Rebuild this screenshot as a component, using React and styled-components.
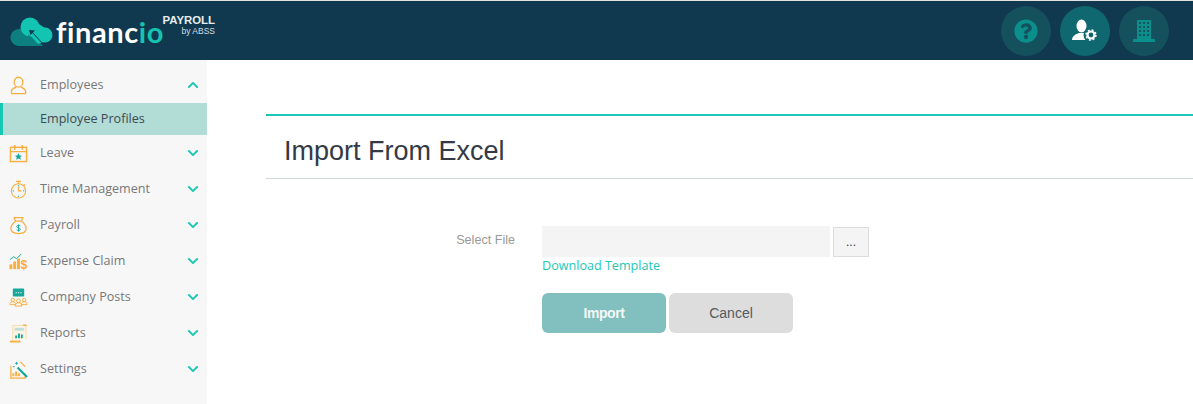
import React from 'react';
import styled, { createGlobalStyle } from 'styled-components';
import { FaQuestionCircle, FaChevronUp, FaChevronDown } from 'react-icons/fa';

const GlobalStyle = createGlobalStyle`
  html, body {
    margin: 0;
    padding: 0;
    background: #fff;
    font-family: 'Open Sans', sans-serif;
  }
`;

const Page = styled.div`
  width: 1193px;
  height: 404px;
  overflow: hidden;
  display: flex;
  flex-direction: column;
  border-top: 1px solid #e3e3e3;
  box-sizing: border-box;
`;

const Header = styled.header`
  height: 59px;
  flex: none;
  background: #10394f;
  display: flex;
  align-items: center;
  justify-content: space-between;
  padding: 0 24px 0 10px;
`;

const Logo = styled.div`
  align-self: flex-start;
  display: flex;
  align-items: flex-start;
`;

const LogoMark = styled.svg`
  width: 43px;
  height: 30px;
  margin-top: 16px;
`;

const LogoWord = styled.div`
  width: 108px;
  box-sizing: border-box;
  padding-left: 3px;
  font-family: 'Lato', sans-serif;
  font-weight: bold;
  font-size: 29px;
  line-height: 32px;
  color: #fff;
  margin-top: 15px;
  letter-spacing: 0.6px;

  span {
    color: #16c3b0;
  }
`;

const LogoTag = styled.div`
  font-family: 'Liberation Sans', sans-serif;
  text-align: right;
  color: #e8edf0;
  margin-top: 12px;
  width: 54px;
  white-space: nowrap;
  font-size: 11.4px;
  line-height: 14px;
  font-weight: bold;

  small {
    display: block;
    font-size: 8.5px;
    line-height: 9px;
    font-weight: normal;
    color: #d5dde2;
  }
`;

const HeaderActions = styled.div`
  display: flex;
  gap: 9px;
`;

const RoundButton = styled.div`
  width: 50px;
  height: 50px;
  border-radius: 50%;
  background: ${p => (p.$active ? '#0f6870' : '#15505d')};
  color: ${p => (p.$active ? '#fff' : '#0b8f8c')};
  display: flex;
  align-items: center;
  justify-content: center;
  font-size: 24px;
`;

const Body = styled.div`
  flex: 1;
  display: flex;
  min-height: 0;
`;

const Sidebar = styled.nav`
  width: 207px;
  flex: none;
  background: #f7f7f7;
  padding-top: 7px;
  box-sizing: border-box;
`;

const NavRow = styled.div`
  height: 36px;
  display: flex;
  align-items: center;
  padding: 0 8px 0 9px;
  color: #77777a;
  font-size: 12.6px;
`;

const NavIcon = styled.svg`
  width: 19px;
  height: 19px;
  flex: none;
  margin-right: 12px;
`;

const NavLabel = styled.span`
  flex: 1;
  padding-bottom: 2px;
`;

const Chevron = styled.span`
  color: #1cc7b5;
  font-size: 12px;
  display: flex;
`;

const SubRow = styled.div`
  height: 32px;
  display: flex;
  align-items: center;
  box-sizing: border-box;
  background: #b2dcd6;
  border-left: 3px solid #16c8b4;
  padding: 0 0 2px 37px;
  color: #3c4a52;
  font-size: 12.6px;
`;

const Main = styled.main`
  flex: 1;
  padding: 54px 0 0 59px;
`;

const Card = styled.section`
  border-top: 2px solid #1cc7b5;
`;

const Title = styled.h1`
  margin: 0;
  height: 63px;
  box-sizing: border-box;
  border-bottom: 1px solid #cfd8dc;
  padding-left: 18px;
  font-family: 'Liberation Sans', sans-serif;
  font-weight: normal;
  font-size: 27px;
  line-height: 70px;
  color: #333a45;
`;

const Form = styled.div`
  display: grid;
  grid-template-columns: 249px 1fr;
  column-gap: 27px;
  padding-top: 47px;
`;

const FieldLabel = styled.label`
  font-family: 'Liberation Sans', sans-serif;
  font-size: 12.6px;
  color: #999;
  text-align: right;
  line-height: 29px;
`;

const FileRow = styled.div`
  display: flex;
  align-items: flex-end;
  gap: 3px;
`;

const FileInput = styled.div`
  width: 288px;
  height: 31px;
  background: #f4f4f4;
`;

const BrowseButton = styled.div`
  width: 36px;
  height: 30px;
  box-sizing: border-box;
  background: #f4f4f4;
  border: 1px solid #ddd;
  display: flex;
  align-items: center;
  justify-content: center;
  color: #333;
  font-family: 'Liberation Sans', sans-serif;
  font-size: 12px;
`;

const TemplateLink = styled.a`
  display: block;
  color: #1cc7b5;
  font-size: 12.6px;
  line-height: 17px;
`;

const Actions = styled.div`
  display: flex;
  gap: 3px;
  margin-top: 19px;
`;

const ActionButton = styled.button`
  width: 124px;
  height: 40px;
  border: none;
  border-radius: 6px;
  background: ${p => (p.$primary ? '#82bfbf' : '#dddddd')};
  color: ${p => (p.$primary ? '#f2f8f8' : '#555a60')};
  font-family: 'Liberation Sans', sans-serif;
  font-size: 14px;
  font-weight: ${p => (p.$primary ? 'bold' : 'normal')};
  letter-spacing: ${p => (p.$primary ? '-0.4px' : '0')};
`;

const orange = '#f9ae3f';
const teal = '#17a89b';

const icons = {
  employees: (
    <g fill="none" stroke={orange} strokeWidth="1.4">
      <ellipse cx="10" cy="6.500" rx="4.600" ry="5.200" />
      <path d="M2.500 18.500v-2c0-3 3-4 5-5M17.500 18.500v-2c0-3-3-4-5-5M2.500 18.500h15" />
    </g>
  ),
  leave: (
    <g fill="none" stroke={orange} strokeWidth="1.5">
      <rect x="1.500" y="3.500" width="17" height="15" />
      <path d="M1.500 8h17M6 1v5M14 1v5" />
      <path d="M10 9.500l1.200 2.600 2.600.2-2 1.700.7 2.600-2.500-1.400-2.500 1.400.7-2.600-2-1.700 2.600-.2z" fill={teal} stroke="none" />
    </g>
  ),
  time: (
    <g fill="none" stroke={orange} strokeWidth="1.200">
      <circle cx="10" cy="11.500" r="7.500" />
      <path d="M7.500 1.500h5M10 1.500v2.500M15.500 4.500l1.500 1.500" />
      <path d="M10 7v4.500h3.500" />
      <path d="M10 5.500v1M4 11.500h1M15 11.500h1M10 16.500v1" stroke={teal} />
    </g>
  ),
  payroll: (
    <g fill="none" stroke={orange} strokeWidth="1.300">
      <path d="M7 5.500L5.500 1.800h9L13 5.500M7 5.500h6M7 5.500c-3 2-5 5-5 8 0 3.500 3 5 8 5s8-1.500 8-5c0-3-2-6-5-8" />
      <path d="M12 10.500c-.5-1-3.500-1.300-3.900.3-.4 2 3.900 1.300 3.900 3.200 0 1.500-3 1.700-4 .4M10 9v7.500" stroke={teal} strokeWidth="1" />
    </g>
  ),
  expense: (
    <g>
      <path d="M1 8l4-3 3 2 5-5" fill="none" stroke={teal} strokeWidth="1" />
      <g fill={orange}>
        <rect x="0.500" y="13" width="3" height="5" />
        <rect x="4.500" y="10" width="3" height="8" />
        <rect x="8.500" y="7" width="3" height="11" />
      </g>
      <text x="12.200" y="17.500" fontFamily="Liberation Sans" fontWeight="bold" fontSize="13" fill={orange}>$</text>
    </g>
  ),
  posts: (
    <g>
      <rect x="4" y="0.500" width="12" height="8.500" rx="1" fill={teal} />
      <path d="M7 5h1.200M9.500 5h1.200M12 5h1.200" stroke="#fff" strokeWidth="1.300" />
      <g fill="none" stroke={orange} strokeWidth="1">
        <circle cx="4" cy="12.500" r="1.800" />
        <path d="M1 17.500c0-2 1-3 3-3s3 1 3 3z" />
        <circle cx="16" cy="12.500" r="1.800" />
        <path d="M13 17.500c0-2 1-3 3-3s3 1 3 3z" />
        <circle cx="10" cy="13.500" r="2" />
        <path d="M6.500 19c0-2.500 1.500-3.500 3.500-3.500s3.500 1 3.500 3.500z" />
      </g>
    </g>
  ),
  reports: (
    <g>
      <path d="M4 18V1.500h14V16" fill="#fdf3e2" stroke="#f6dcb2" strokeWidth="1" />
      <path d="M15 1l3.500.5" stroke={orange} strokeWidth="1.500" />
      <rect x="6" y="4" width="10" height="3" fill="#bfdedb" />
      <path d="M7.500 15v-3M10.500 15v-5M13.500 15V11" stroke={teal} strokeWidth="2" />
      <path d="M1 18.500h11" stroke={orange} strokeWidth="2" />
    </g>
  ),
  settings: (
    <g>
      <path d="M2 6v13h15v-5M12 2l5 5" fill="none" stroke={orange} strokeWidth="1.300" />
      <path d="M4.500 17v-3M7.500 17v-5M10.500 17v-3" stroke={orange} strokeWidth="2" />
      <path d="M9 8l10 10" stroke={teal} strokeWidth="2.300" />
      <path d="M8 2v3M6.500 3.500h3M4 7h2" stroke={teal} strokeWidth="1" />
    </g>
  ),
};

const menu = [
  { key: 'leave', label: 'Leave' },
  { key: 'time', label: 'Time Management' },
  { key: 'payroll', label: 'Payroll' },
  { key: 'expense', label: 'Expense Claim' },
  { key: 'posts', label: 'Company Posts' },
  { key: 'reports', label: 'Reports' },
  { key: 'settings', label: 'Settings' },
];

function UserGearIcon() {
  return (
    <svg width="26" height="23" viewBox="0 0 26 23">
      <ellipse cx="9.500" cy="7" rx="5" ry="6.500" fill="#fff" />
      <path d="M0 21c0-4 4-6 7-7h5c2 0 3 .5 4 1l-2 6z" fill="#fff" />
      <circle cx="19" cy="16" r="7.500" fill="#0f6870" />
      <circle cx="19" cy="16" r="3.500" fill="none" stroke="#fff" strokeWidth="2.200" />
      <circle cx="19" cy="16" r="5" fill="none" stroke="#fff" strokeWidth="1.400" strokeDasharray="2 1.930" />
    </svg>
  );
}

function BuildingIcon() {
  const cols = [6, 10, 14];
  const rows = [2, 6, 10, 14];
  return (
    <svg width="22" height="22" viewBox="0 0 22 22" shapeRendering="crispEdges">
      <path d="M4 0h14v19h4v3H0v-3h4z" fill="currentColor" />
      {rows.map(y =>
        cols.map(x => <rect key={`${x}-${y}`} x={x} y={y} width="2" height="2" fill="#15505d" />)
      )}
    </svg>
  );
}

export default function App() {
  return (
    <>
      <GlobalStyle />
      <Page>
        <Header>
          <Logo>
            <LogoMark viewBox="0 0 43 30">
              <path d="M8 29a8.500 8.500 0 1 1 2-17c4-1 8 1 11 4l12 13z" fill="#0d7f80" />
              <circle cx="20" cy="10" r="9.500" fill="#14c4b2" />
              <circle cx="35" cy="18" r="7.500" fill="#14c4b2" />
              <path d="M20 1l15 10-1 14-6 2-10-11-6-2z" fill="#14c4b2" />
              <path d="M18 17l11 12h-9z" fill="#0d7f80" />
              <path d="M22 15l11 12" stroke="#10394f" strokeWidth="1" />
              <path d="M19 13l6 .5-4.500 4.500z" fill="#10394f" />
            </LogoMark>
            <LogoWord>financ<span>io</span></LogoWord>
            <LogoTag>PAYROLL<small>by ABSS</small></LogoTag>
          </Logo>
          <HeaderActions>
            <RoundButton><FaQuestionCircle /></RoundButton>
            <RoundButton $active><UserGearIcon /></RoundButton>
            <RoundButton><BuildingIcon /></RoundButton>
          </HeaderActions>
        </Header>
        <Body>
          <Sidebar>
            <NavRow>
              <NavIcon viewBox="0 0 20 20">{icons.employees}</NavIcon>
              <NavLabel>Employees</NavLabel>
              <Chevron><FaChevronUp /></Chevron>
            </NavRow>
            <SubRow>Employee Profiles</SubRow>
            {menu.map(item => (
              <NavRow key={item.key}>
                <NavIcon viewBox="0 0 20 20">{icons[item.key]}</NavIcon>
                <NavLabel>{item.label}</NavLabel>
                <Chevron><FaChevronDown /></Chevron>
              </NavRow>
            ))}
          </Sidebar>
          <Main>
            <Card>
              <Title>Import From Excel</Title>
              <Form>
                <FieldLabel>Select File</FieldLabel>
                <div>
                  <FileRow>
                    <FileInput />
                    <BrowseButton>...</BrowseButton>
                  </FileRow>
                  <TemplateLink>Download Template</TemplateLink>
                  <Actions>
                    <ActionButton $primary>Import</ActionButton>
                    <ActionButton>Cancel</ActionButton>
                  </Actions>
                </div>
              </Form>
            </Card>
          </Main>
        </Body>
      </Page>
    </>
  );
}
